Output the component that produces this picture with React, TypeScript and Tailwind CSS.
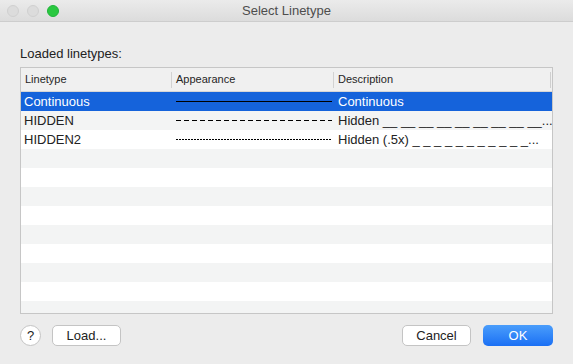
const rows = [
  { name: "Continuous", dash: "", desc: "Continuous", selected: true },
  { name: "HIDDEN", dash: "5 3", desc: "Hidden __ __ __ __ __ __ __ __ __...", selected: false },
  { name: "HIDDEN2", dash: "2 1", desc: "Hidden (.5x) _ _ _ _ _ _ _ _ _ _ _...", selected: false },
];

function TrafficLight({ color }: { color: string }) {
  return <span className={`h-[12px] w-[12px] rounded-full border ${color}`} />;
}

function LinePreview({ dash }: { dash: string }) {
  return (
    <svg width="156" height="3" className="block">
      <line
        x1="0"
        y1="1.5"
        x2="156"
        y2="1.5"
        stroke="#000"
        strokeWidth="1"
        strokeDasharray={dash || undefined}
      />
    </svg>
  );
}

export default function App() {
  const filler = Array.from({ length: 10 });
  return (
    <div
      className="flex h-[364px] w-[573px] flex-col overflow-hidden bg-[#ececec] text-[#222]"
      style={{ fontFamily: '"Liberation Sans", Arial, sans-serif' }}
    >
      {/* title bar */}
      <div className="relative flex h-[22px] shrink-0 items-center border-b border-[#cdcdcd] bg-gradient-to-b from-[#ebebeb] to-[#dcdcdc]">
        <div className="absolute left-[7px] top-[5px] flex gap-[8px]">
          <TrafficLight color="border-[#d0d0d0] bg-[#dcdcdc]" />
          <TrafficLight color="border-[#d0d0d0] bg-[#dcdcdc]" />
          <TrafficLight color="border-[#20b43a] bg-[#2ac840]" />
        </div>
        <div className="w-full text-center text-[13px] text-[#4d4d4d]">Select Linetype</div>
      </div>

      <div className="flex flex-1 flex-col px-[20px]">
        <div className="mt-[24px] text-[13px] leading-[16px] text-[#222]">Loaded linetypes:</div>

        {/* table */}
        <div className="mt-[5px] h-[247px] overflow-hidden border border-[#c6c6c6] bg-white">
          <div className="flex h-[24px] items-center border-b border-[#d6d6d6] bg-[#f0f0f0] text-[11px] text-[#262626]">
            <div className="w-[150px] pl-[4px]">Linetype</div>
            <div className="h-[16px] w-px bg-[#d2d2d2]" />
            <div className="w-[161px] pl-[4px]">Appearance</div>
            <div className="h-[16px] w-px bg-[#d2d2d2]" />
            <div className="flex-1 pl-[4px]">Description</div>
            <div className="mr-[1px] h-[16px] w-px bg-[#cfcfcf]" />
          </div>

          {rows.map((r, i) => (
            <div
              key={r.name}
              className={`flex h-[19px] items-center text-[13px] ${
                r.selected
                  ? "bg-[#1563db] text-white"
                  : i % 2 === 1
                  ? "bg-[#f3f4f4] text-[#222]"
                  : "bg-white text-[#222]"
              }`}
            >
              <div className="w-[151px] pl-[3px]">{r.name}</div>
              <div className="flex w-[162px] items-center pl-[4px]">
                <LinePreview dash={r.dash} />
              </div>
              <div className="min-w-0 flex-1 whitespace-nowrap pl-[4px]">{r.desc}</div>
            </div>
          ))}

          {filler.map((_, i) => (
            <div
              key={i}
              className={`h-[19px] ${i % 2 === 0 ? "bg-[#f3f4f4]" : "bg-white"}`}
            />
          ))}
        </div>

        {/* footer */}
        <div className="mt-[11px] flex items-center">
          <button className="flex h-[21px] w-[21px] items-center justify-center rounded-full border border-[#c4c4c4] bg-white text-[13px] text-[#222]">
            ?
          </button>
          <button className="ml-[11px] h-[21px] w-[69px] rounded-[5px] border border-[#c4c4c4] bg-white text-[13px] text-[#222]">
            Load...
          </button>
          <div className="flex-1" />
          <button className="h-[21px] w-[69px] rounded-[5px] border border-[#c4c4c4] bg-white text-[13px] text-[#222]">
            Cancel
          </button>
          <button className="ml-[12px] h-[21px] w-[70px] rounded-[5px] bg-gradient-to-b from-[#4a9dfb] to-[#1a6ff4] text-[13px] text-white">
            OK
          </button>
        </div>
      </div>
    </div>
  );
}
